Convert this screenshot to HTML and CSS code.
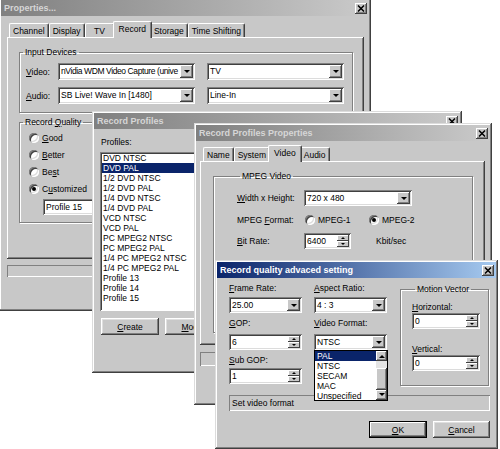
FILE: index.html
```html
<!DOCTYPE html>
<html lang="en">
<head>
    <meta charset="UTF-8">
    <title>Record quality settings</title>
    <link rel="stylesheet" href="styles.css">
</head>
<body>
<div class="desktop">

    <!-- Janela principal: Properties -->
    <div class="win" id="props">
        <div class="titlebar">
            <span>Properties...</span>
            <span class="close"><svg width="8" height="7" viewBox="0 0 8 7"><path d="M1 0.5L7 6.5M7 0.5L1 6.5" stroke="#000" stroke-width="1.5"/></svg></span>
        </div>
        <div class="body props-body">
            <div class="tabs">
                <span class="tab">Channel</span>
                <span class="tab">Display</span>
                <span class="tab">TV</span>
                <span class="tab selected">Record</span>
                <span class="tab">Storage</span>
                <span class="tab">Time Shifting</span>
            </div>
            <div class="panel">
                <fieldset class="group devices">
                    <legend>Input Devices</legend>
                    <div class="devices-grid">
                        <span><u>V</u>ideo:</span>
                        <div class="combo"><span class="text tight">nVidia WDM Video Capture (unive</span><i class="drop"></i></div>
                        <div class="combo"><span class="text">TV</span><i class="drop"></i></div>
                        <span><u>A</u>udio:</span>
                        <div class="combo"><span class="text">SB Live! Wave In [1480]</span><i class="drop"></i></div>
                        <div class="combo"><span class="text">Line-In</span><i class="drop"></i></div>
                    </div>
                </fieldset>
                <fieldset class="group quality">
                    <legend>Record <u>Q</u>uality</legend>
                    <div class="opts">
                        <div class="radio-row"><i class="radio"></i><span><u>G</u>ood</span></div>
                        <div class="radio-row"><i class="radio"></i><span><u>B</u>etter</span></div>
                        <div class="radio-row"><i class="radio"></i><span>Be<u>s</u>t</span></div>
                        <div class="radio-row"><i class="radio checked"></i><span>C<u>u</u>stomized</span></div>
                        <div class="edit profile-edit">Profile 15</div>
                    </div>
                </fieldset>
            </div>
            <div class="statusbox props-status"></div>
        </div>
    </div>

    <!-- Record Profiles -->
    <div class="win" id="profiles">
        <div class="titlebar">
            <span>Record Profiles</span>
            <span class="close"><svg width="8" height="7" viewBox="0 0 8 7"><path d="M1 0.5L7 6.5M7 0.5L1 6.5" stroke="#000" stroke-width="1.5"/></svg></span>
        </div>
        <div class="body profiles-body">
            <div class="caption">Profiles:</div>
            <ul class="listbox">
                <li>DVD NTSC</li>
                <li class="sel">DVD PAL</li>
                <li>1/2 DVD NTSC</li>
                <li>1/2 DVD PAL</li>
                <li>1/4 DVD NTSC</li>
                <li>1/4 DVD PAL</li>
                <li>VCD NTSC</li>
                <li>VCD PAL</li>
                <li>PC MPEG2 NTSC</li>
                <li>PC MPEG2 PAL</li>
                <li>1/4 PC MPEG2 NTSC</li>
                <li>1/4 PC MPEG2 PAL</li>
                <li>Profile 13</li>
                <li>Profile 14</li>
                <li>Profile 15</li>
            </ul>
            <div class="btn-row">
                <button class="btn"><u>C</u>reate</button>
                <button class="btn"><u>M</u>odify</button>
            </div>
        </div>
    </div>

    <!-- Record Profiles Properties -->
    <div class="win" id="profile-props">
        <div class="titlebar">
            <span>Record Profiles Properties</span>
            <span class="close"><svg width="8" height="7" viewBox="0 0 8 7"><path d="M1 0.5L7 6.5M7 0.5L1 6.5" stroke="#000" stroke-width="1.5"/></svg></span>
        </div>
        <div class="body pp-body">
            <div class="tabs">
                <span class="tab">Name</span>
                <span class="tab">System</span>
                <span class="tab selected">Video</span>
                <span class="tab">Audio</span>
            </div>
            <div class="panel">
                <fieldset class="group mpeg">
                    <legend>MPEG Video</legend>
                    <div class="field-row">
                        <span class="lbl"><u>W</u>idth x Height:</span>
                        <div class="combo size-combo"><span class="text">720 x 480</span><i class="drop"></i></div>
                    </div>
                    <div class="field-row gap6">
                        <span class="lbl">MPEG <u>F</u>ormat:</span>
                        <div class="radio-opt"><i class="radio"></i><span>MPEG-1</span></div>
                        <div class="radio-opt"><i class="radio checked"></i><span>MPEG-2</span></div>
                    </div>
                    <div class="field-row gap5">
                        <span class="lbl"><u>B</u>it Rate:</span>
                        <div class="spin rate-spin"><span class="text">6400</span><span class="arrows"><i class="up"></i><i class="down"></i></span></div>
                        <span class="unit">Kbit/sec</span>
                    </div>
                </fieldset>
            </div>
            <div class="statusbox pp-status"></div>
        </div>
    </div>

    <!-- Record quality advaced setting (ativa) -->
    <div class="win" id="advanced">
        <div class="titlebar active">
            <span>Record quality advaced setting</span>
            <span class="close"><svg width="8" height="7" viewBox="0 0 8 7"><path d="M1 0.5L7 6.5M7 0.5L1 6.5" stroke="#000" stroke-width="1.5"/></svg></span>
        </div>
        <div class="body adv-body">
            <div class="adv-grid">
                <div class="col">
                    <span class="lbl"><u>F</u>rame Rate:</span>
                    <div class="combo m4"><span class="text">25.00</span><i class="drop"></i></div>
                    <span class="lbl m5"><u>G</u>OP:</span>
                    <div class="spin m6"><span class="text">6</span><span class="arrows"><i class="up"></i><i class="down"></i></span></div>
                    <span class="lbl m5"><u>S</u>ub GOP:</span>
                    <div class="spin m3"><span class="text">1</span><span class="arrows"><i class="up"></i><i class="down"></i></span></div>
                </div>
                <div class="col col-b">
                    <span class="lbl"><u>A</u>spect Ratio:</span>
                    <div class="combo m4"><span class="text">4 : 3</span><i class="drop"></i></div>
                    <span class="lbl m5"><u>V</u>ideo Format:</span>
                    <div class="combo m6 open-combo">
                        <span class="text">NTSC</span><i class="drop"></i>
                        <div class="droplist">
                            <ul>
                                <li class="sel">PAL</li>
                                <li>NTSC</li>
                                <li>SECAM</li>
                                <li>MAC</li>
                                <li>Unspecified</li>
                            </ul>
                            <div class="vscroll">
                                <i class="sb-btn up"></i>
                                <i class="sb-track"></i>
                                <i class="sb-thumb"></i>
                                <i class="sb-btn down"></i>
                            </div>
                        </div>
                    </div>
                </div>
                <fieldset class="group motion">
                    <legend>Motion Vector</legend>
                    <span class="lbl m8"><u>H</u>orizontal:</span>
                    <div class="spin m1"><span class="text">0</span><span class="arrows"><i class="up"></i><i class="down"></i></span></div>
                    <span class="lbl m15"><u>V</u>ertical:</span>
                    <div class="spin m1"><span class="text">0</span><span class="arrows"><i class="up"></i><i class="down"></i></span></div>
                </fieldset>
            </div>
            <div class="statusbox adv-status">Set video format</div>
            <div class="btn-row adv-buttons">
                <button class="btn default"><u>O</u>K</button>
                <button class="btn cancel"><u>C</u>ancel</button>
            </div>
        </div>
    </div>

</div>
</body>
</html>
```

FILE: styles.css
```css
* {
    box-sizing: border-box;
}

body {
    margin: 0;
    background: #fff;
    font-family: "Liberation Sans", Arial, sans-serif;
    font-size: 8.5px;
    line-height: 10px;
    color: #000;
}

.desktop {
    position: relative;
    width: 500px;
    height: 449px;
    overflow: hidden;
}

/* Janelas */
.win {
    position: absolute;
    background: #c8c8c8;
    padding: 2px;
    box-shadow: inset -1px -1px #404040, inset 1px 1px #dcdcdc, inset -2px -2px #808080, inset 2px 2px #fff;
}

#props {
    left: -1px;
    top: -2px;
    width: 372px;
    height: 313px;
}

#profiles {
    left: 92px;
    top: 111px;
    width: 370px;
    height: 262px;
}

#profile-props {
    left: 194px;
    top: 123px;
    width: 298px;
    height: 282px;
}

#advanced {
    left: 215px;
    top: 260px;
    width: 283px;
    height: 189px;
}

.titlebar {
    height: 16px;
    display: flex;
    align-items: center;
    justify-content: space-between;
    padding: 0 2px 0 3px;
    background: linear-gradient(to right, #808080, #cacaca);
    color: #d6d6d6;
    font-weight: bold;
    font-size: 9px;
}

.titlebar.active {
    background: linear-gradient(to right, #0a246a, #a6caf0);
    color: #fff;
}

.close {
    width: 12px;
    height: 11px;
    display: flex;
    align-items: center;
    justify-content: center;
    background: #c8c8c8;
    box-shadow: inset -1px -1px #404040, inset 1px 1px #fff, inset -2px -2px #808080;
}

/* Abas */
.tabs {
    display: flex;
    align-items: flex-end;
    height: 16px;
    padding-left: 2px;
}

.tab {
    height: 14px;
    min-width: 30px;
    padding: 0 3px;
    display: flex;
    align-items: center;
    justify-content: center;
    border: 1px solid;
    border-color: #fff #404040 transparent #fff;
    border-bottom: none;
    border-radius: 2px 2px 0 0;
    box-shadow: inset -1px 0 #808080;
    white-space: nowrap;
}

.tab.selected {
    position: relative;
    z-index: 1;
    height: 17px;
    margin: 0 -2px -1px;
    padding: 0 5px 2px;
    background: #c8c8c8;
}

.panel {
    box-shadow: inset -1px -1px #404040, inset 1px 1px #fff, inset -2px -2px #808080;
}

/* Group box */
.group {
    margin: 0;
    min-width: 0;
    padding: 0;
    border: 1px solid #808080;
    box-shadow: inset 1px 1px #fff, 1px 1px #fff;
}

.group legend {
    margin-left: 3px;
    padding: 0 2px;
    line-height: 10px;
}

/* Controles */
.combo,
.spin,
.edit {
    display: flex;
    height: 16px;
    padding: 2px;
    background: #fff;
    box-shadow: inset 1px 1px #808080, inset -1px -1px #fff, inset 2px 2px #404040, inset -2px -2px #dcdcdc;
}

.combo .text,
.spin .text {
    flex: 1;
    min-width: 0;
    padding-left: 1px;
    overflow: hidden;
    white-space: nowrap;
    line-height: 12px;
}

.combo .text.tight {
    letter-spacing: -0.4px;
}

.drop {
    position: relative;
    flex: none;
    width: 13px;
    background: #c8c8c8;
    box-shadow: inset -1px -1px #404040, inset 1px 1px #fff, inset -2px -2px #808080;
}

.drop::after {
    content: "";
    position: absolute;
    left: 4px;
    top: 5px;
    border-left: 3px solid transparent;
    border-right: 3px solid transparent;
    border-top: 3px solid #000;
}

.arrows {
    display: flex;
    flex: none;
    flex-direction: column;
    width: 12px;
}

.arrows i {
    position: relative;
    flex: 1;
    background: #c8c8c8;
    box-shadow: inset -1px -1px #404040, inset 1px 1px #fff;
}

.arrows i::after {
    content: "";
    position: absolute;
    left: 4px;
    top: 2px;
    border-left: 2px solid transparent;
    border-right: 2px solid transparent;
}

.arrows .up::after {
    border-bottom: 2px solid #000;
}

.arrows .down::after {
    border-top: 2px solid #000;
}

.edit {
    padding: 2px 3px;
    line-height: 12px;
}

.radio {
    position: relative;
    flex: none;
    width: 10px;
    height: 10px;
    border-radius: 50%;
    background: #fff;
    box-shadow: inset 1px 1px #808080, inset -1px -1px #fff, inset 2px 2px #404040, inset -2px -2px #dcdcdc;
}

.radio.checked::after {
    content: "";
    position: absolute;
    left: 3px;
    top: 3px;
    width: 4px;
    height: 4px;
    border-radius: 50%;
    background: #000;
}

.btn {
    height: 17px;
    width: 58px;
    padding: 0;
    border: none;
    background: #c8c8c8;
    font: inherit;
    color: #000;
    box-shadow: inset -1px -1px #404040, inset 1px 1px #fff, inset -2px -2px #808080, inset 2px 2px #dfdfdf;
}

.btn.default {
    box-shadow: inset 0 0 0 1px #000, inset -2px -2px #404040, inset 2px 2px #fff, inset -3px -3px #808080;
}

.statusbox {
    box-shadow: inset 1px 1px #808080, inset -1px -1px #fff;
}

.sel {
    background: #0a246a;
    color: #fff;
}

/* Properties */
.props-body {
    padding: 5px 5px 0 6px;
}

.props-body .panel {
    height: 222px;
    padding: 10px 11px 0 12px;
}

.devices-grid {
    display: grid;
    grid-template-columns: 20px 137px 137px;
    column-gap: 12px;
    row-gap: 7px;
    align-items: center;
    padding: 6px 0 8px 6px;
}

.devices-grid .combo {
    height: 17px;
}

.quality {
    margin-top: 4px;
    width: 181px;
    height: 106px;
}

.quality .opts {
    display: flex;
    flex-direction: column;
    padding: 2px 0 0 9px;
}

.radio-row {
    display: flex;
    align-items: center;
    gap: 3px;
    height: 17px;
}

.profile-edit {
    width: 130px;
    margin: 2px 0 0 14px;
}

.props-status {
    height: 12px;
    margin-top: 6px;
}

/* Record Profiles */
.profiles-body {
    padding: 8px 0 0 6px;
}

.caption {
    padding-left: 1px;
}

.listbox {
    width: 200px;
    height: 159px;
    margin: 5px 0 0;
    padding: 1px 2px;
    list-style: none;
    background: #fff;
    box-shadow: inset 1px 1px #808080, inset -1px -1px #fff, inset 2px 2px #404040;
}

.listbox li {
    padding-left: 1px;
}

.btn-row {
    display: flex;
    gap: 6px;
}

.profiles-body .btn-row {
    margin: 7px 0 0 1px;
}

/* Record Profiles Properties */
.pp-body {
    padding: 4px 5px 0 4px;
}

.pp-body .tabs {
    padding-left: 3px;
}

.pp-body .panel {
    height: 184px;
    padding: 10px 12px 0 13px;
}

.mpeg {
    height: 162px;
    padding: 9px 0 0 23px;
}

.field-row {
    display: flex;
    align-items: center;
    height: 16px;
}

.field-row.gap6 {
    margin-top: 6px;
}

.field-row.gap5 {
    margin-top: 5px;
}

.field-row .lbl {
    width: 67px;
    flex: none;
}

.size-combo {
    width: 108px;
}

.radio-opt {
    display: flex;
    align-items: center;
    gap: 3px;
    width: 63px;
    margin-left: 1px;
}

.rate-spin {
    width: 47px;
}

.unit {
    margin-left: 25px;
}

.pp-status {
    height: 14px;
    margin-top: 7px;
}

/* Advanced setting */
.adv-body {
    padding: 5px 6px 0 12px;
}

.adv-grid {
    display: flex;
    align-items: flex-start;
}

.col {
    display: flex;
    flex-direction: column;
    width: 73px;
}

.col-b {
    margin-left: 12px;
}

.lbl {
    display: block;
    height: 10px;
    white-space: nowrap;
}

.m1 { margin-top: 1px; }
.m3 { margin-top: 3px; }
.m4 { margin-top: 4px; }
.m5 { margin-top: 5px; }
.m6 { margin-top: 6px; }
.m8 { margin-top: 8px; }
.m15 { margin-top: 15px; }

.motion {
    width: 89px;
    height: 102px;
    margin: 1px 0 0 13px;
    padding: 0 8px 0 11px;
    display: flex;
    flex-direction: column;
}

.open-combo {
    position: relative;
}

.droplist {
    position: absolute;
    left: 0;
    top: 16px;
    width: 74px;
    height: 51px;
    display: flex;
    border: 1px solid #000;
    background: #fff;
    z-index: 2;
}

.droplist ul {
    flex: 1;
    margin: 0;
    padding: 0;
    list-style: none;
}

.droplist li {
    padding-left: 2px;
}

.vscroll {
    display: flex;
    flex-direction: column;
    width: 11px;
}

.sb-btn {
    position: relative;
    height: 10px;
    background: #c8c8c8;
    box-shadow: inset -1px -1px #404040, inset 1px 1px #fff, inset -2px -2px #808080;
}

.sb-btn::after {
    content: "";
    position: absolute;
    left: 3px;
    top: 4px;
    border-left: 3px solid transparent;
    border-right: 3px solid transparent;
}

.sb-btn.up::after {
    border-bottom: 3px solid #000;
}

.sb-btn.down::after {
    top: 3px;
    border-top: 3px solid #000;
}

.sb-track {
    height: 7px;
    background: #e4e4e4;
}

.sb-thumb {
    height: 22px;
    background: #c8c8c8;
    box-shadow: inset -1px -1px #404040, inset 1px 1px #fff, inset -2px -2px #808080;
}

.adv-status {
    height: 16px;
    margin-top: 9px;
    padding: 3px 3px 0;
}

.adv-buttons {
    justify-content: flex-end;
    margin-top: 10px;
}

.btn.cancel {
    width: 57px;
}
```
